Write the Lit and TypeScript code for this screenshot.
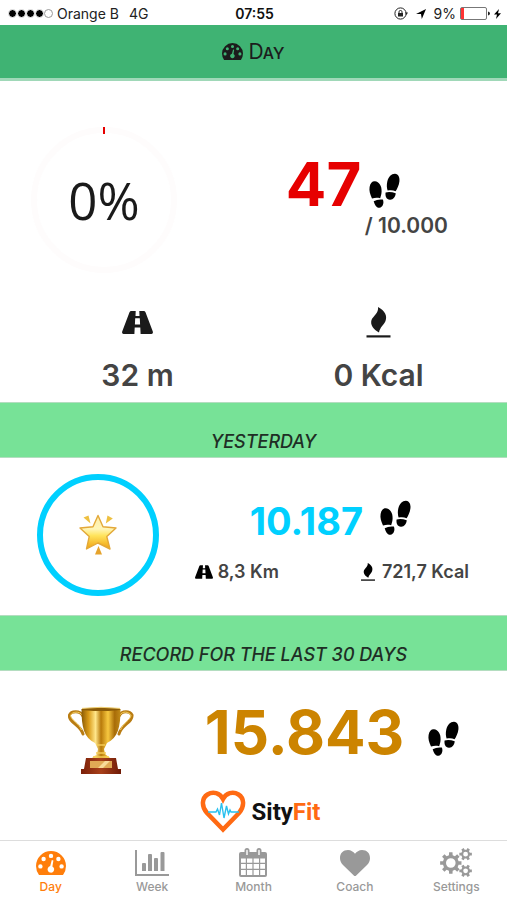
import { LitElement, html, css, svg } from "lit";
import { customElement, property } from "lit/decorators.js";

const gaugePath =
  "M3 24Q0 20 0 15A15 15 0 0 1 30 15Q30 20 27 24Z" +
  "M12.8 4.9a2.2 2.2 0 1 0 4.4 0a2.2 2.2 0 1 0-4.4 0Z" +
  "M5.4 8a2.2 2.2 0 1 0 4.4 0a2.2 2.2 0 1 0-4.4 0Z" +
  "M20.2 8a2.2 2.2 0 1 0 4.4 0a2.2 2.2 0 1 0-4.4 0Z" +
  "M2.2 15.4a2.2 2.2 0 1 0 4.4 0a2.2 2.2 0 1 0-4.4 0Z" +
  "M23.4 15.4a2.2 2.2 0 1 0 4.4 0a2.2 2.2 0 1 0-4.4 0Z" +
  "M15.8 9L17.4 9.4L16.4 15.4A3.3 3.3 0 1 1 14.2 15.1Z";

/** Outline of a toothed wheel with a round hole, to be filled even-odd. */
function gear(cx: number, cy: number, outer: number, inner: number, hole: number, teeth: number): string {
  const points: string[] = [];
  const step = (Math.PI * 2) / teeth;
  for (let i = 0; i < teeth; i++) {
    const a = i * step;
    for (const [r, d] of [[inner, -0.3], [outer, -0.2], [outer, 0.2], [inner, 0.3]]) {
      points.push(`${(cx + r * Math.cos(a + d * step)).toFixed(2)} ${(cy + r * Math.sin(a + d * step)).toFixed(2)}`);
    }
  }
  return `M${points.join("L")}ZM${cx - hole} ${cy}a${hole} ${hole} 0 1 0 ${hole * 2} 0a${hole} ${hole} 0 1 0 ${-hole * 2} 0Z`;
}

const icons: Record<string, { box: string; art: unknown }> = {
  gauge: { box: "0 0 30 24", art: svg`<path fill-rule="evenodd" d=${gaugePath} />` },
  "tab-gauge": { box: "-2 -3 34 29", art: svg`<path fill-rule="evenodd" d=${gaugePath} />` },
  steps: {
    box: "0 0 31 35",
    art: svg`<path d="M3 25.500C1 21 0 17.500.6 14C1.200 10 3.500 8 6 8.300C10 8.800 13 13 12.600 18.500C12.500 21.500 11.500 24 11.200 25.200C8 24.400 6 24.600 3 25.500Z" />
      <path d="M4.700 28.200Q8.500 26 13.800 26.600C15.500 30 13.500 34.600 10.500 34.800C7 35 5.800 31.500 4.700 28.200Z" />
      <path d="M18.600 17.600C17.800 15 17.500 12 18.300 8.500C19.500 3.500 22.500.6 26 .7C29.500 1 31 4.500 30.400 8.500C29.900 12.500 28 16.200 26.600 18.300C24 17 21.500 17 18.600 17.600Z" />
      <path d="M16.600 19.400Q21.500 18.300 26.700 20.300C26.500 24 24 27 20.800 26.700C17.500 26.300 16 23.500 16.600 19.400Z" />`,
  },
  road: {
    box: "0 0 31 23",
    art: svg`<path fill-rule="evenodd" d="M7.500 1.300Q8 0 9.300 0H21.700Q23 0 23.500 1.300L30.800 20.500Q31.400 23 29.500 23H1.500Q-.4 23 .2 20.500ZM13.700 0L13.500 5H17.500L17.300 0ZM13.200 7.200L12.900 13.500H18.100L17.800 7.200ZM12.700 16.500L12.400 23H18.600L18.300 16.500Z" />`,
  },
  flame: {
    box: "0 0 24 31",
    art: svg`<path d="M11.500 0C18.500 3.500 21 9 19 14C17.800 17.500 13.500 20 12.500 25.500C7 22.500 3.500 18 5 13C6.500 9 12.500 6 11.500 0Z" /><path d="M0 28.300H24V30.500H0Z" />`,
  },
  chart: {
    box: "0 -2 34 29",
    art: svg`<path d="M0 0H2V24H34V26H0ZM7 14Q7 13 8 13H10Q11 13 11 14V21H7ZM13 5Q13 4 14 4H16Q17 4 17 5V21H13ZM19 9Q19 8 20 8H22Q23 8 23 9V21H19ZM25.500 3Q25.500 2 26.500 2H28.500Q29.500 2 29.500 3V21H25.500Z" />`,
  },
  calendar: {
    box: "-3 0 34 29",
    art: svg`<path fill-rule="evenodd" d="M2 4H5.500V2.500Q5.500 0 8 0T10.500 2.500V4H17.500V2.500Q17.500 0 20 0T22.500 2.500V4H26Q28 4 28 6V27Q28 29 26 29H2Q0 29 0 27V6Q0 4 2 4ZM7.300 2.500V7H8.700V2.500Q8.700 1.800 8 1.800T7.300 2.500ZM19.300 2.500V7H20.700V2.500Q20.700 1.800 20 1.800T19.300 2.500Z
      M2 10.500V14.800H6.800V10.500ZM8 10.500V14.800H13.400V10.500ZM14.600 10.500V14.800H20V10.500ZM21.200 10.500V14.800H26V10.500Z
      M2 16V20.800H6.800V16ZM8 16V20.800H13.400V16ZM14.600 16V20.800H20V16ZM21.200 16V20.800H26V16Z
      M2 22V27H6.800V22ZM8 22V27H13.400V22ZM14.600 22V27H20V22ZM21.200 22V27H26V22Z" />`,
  },
  heart: {
    box: "-2 -2 34 29",
    art: svg`<path d="M15 26Q14.300 26 13.800 25.400L3 15C1 12.800 0 10.800 0 8.200C0 3 3.200 0 8 0C11 0 13.300 1.800 15 3.700C16.700 1.800 19 0 22 0C26.800 0 30 3 30 8.200C30 10.800 29 12.800 27 15L16.200 25.400Q15.700 26 15 26Z" />`,
  },
  gears: {
    box: "-1 0 34 29",
    art: svg`<path fill-rule="evenodd" d=${gear(10.8, 15, 10.8, 8, 4.8, 8)} />
      <path fill-rule="evenodd" d=${gear(25.6, 6.2, 6.4, 4.5, 2.4, 6)} />
      <path fill-rule="evenodd" d=${gear(25.6, 22.8, 6.4, 4.5, 2.4, 6)} />`,
  },
  lock: {
    box: "0 0 14 13",
    art: svg`<circle cx="6.500" cy="6.500" r="5.600" fill="none" stroke="currentColor" stroke-width="1" /><path d="M11 5.500H14L12.500 8Z" /><path d="M4 6H9V9.500H4Z" /><path d="M5 6V4.800Q5 3.500 6.500 3.500T8 4.800V6" fill="none" stroke="currentColor" />`,
  },
  arrow: { box: "0 0 10 10", art: svg`<path d="M10 0L5.800 10L5 5H0Z" />` },
  battery: {
    box: "0 0 30 13",
    art: svg`<rect x=".5" y=".5" width="26" height="12" rx="1.500" fill="#fff" stroke="#777" /><path d="M28 4.500Q30 5 30 6.500T28 8.500Z" /><path d="M1 1H4V12H1Z" fill="#f33" />`,
  },
  bolt: { box: "0 0 7 10", art: svg`<path d="M5 0L0 5.500H3L2 10L7 4.200H4Z" />` },
  star: {
    box: "0 0 38 42",
    art: svg`<defs><linearGradient id="g" x1="0" y1="0" x2="0" y2="1"><stop offset="0" stop-color="#fdeca8" /><stop offset=".4" stop-color="#fff6b8" /><stop offset=".6" stop-color="#ffe45c" /><stop offset="1" stop-color="#f0a010" /></linearGradient></defs>
      <path d="M19 1.500L24 12.800L37 14L27.800 22.600L31 35L19 29L7.500 35L10.200 22.600L1 14L14 12.800Z" fill="url(#g)" stroke="#e3a838" stroke-linejoin="round" stroke-width="1.400" />
      <path d="M4.500 3.500L9.500 1.500L11.500 9.500Z" fill="#eec040" /><path d="M28.500 1.500L33.800 4.500L26.800 9.500Z" fill="#eec040" /><path d="M19.500 32L23 40.500H16Z" fill="#e6a32c" />`,
  },
  trophy: {
    box: "0 0 66 68",
    art: svg`<defs><linearGradient id="cup"><stop offset="0" stop-color="#8a5a05" /><stop offset=".18" stop-color="#d99a17" /><stop offset=".36" stop-color="#ffe68a" /><stop offset=".5" stop-color="#b87a0a" /><stop offset=".68" stop-color="#f7c840" /><stop offset=".85" stop-color="#a86c08" /><stop offset="1" stop-color="#c08a18" /></linearGradient>
      <linearGradient id="base"><stop offset="0" stop-color="#7a1f08" /><stop offset=".5" stop-color="#a8401a" /><stop offset="1" stop-color="#6e1a06" /></linearGradient></defs>
      <path d="M15 9C12 3 3 4 1.500 8C0 15 13 18 15 27M51 9C54 3 62 4 64 8C65 15 53 18 51 27" fill="none" stroke="#b97c12" stroke-width="3" stroke-linecap="round" />
      <path d="M14.500 8.500C11.500 3.500 4 4.500 2.500 8.500C3 13 11 16 13.500 23M51.500 8.500C54.500 3.500 61 4.500 63 8.500C62.500 13 55 16 52.500 23" fill="none" stroke="#f3ce62" stroke-width="1" />
      <path d="M13.500 2H52.500C52.500 20 50 31 39 36L36 42L37 47L42 51H24L29 47L30 42L27 36C16 31 13.500 20 13.500 2Z" fill="url(#cup)" />
      <ellipse cx="33" cy="2.200" rx="19.500" ry="1.800" fill="#8c5c08" /><path d="M14 1.400Q33-.8 52 1.400" fill="none" stroke="#f0cf70" stroke-width="1" />
      <path d="M29 38H37M28 46H38M25 50H41" stroke="#f5cc55" stroke-width="1.500" />
      <path d="M18 51H48L50 62H53V67H13V62H16Z" fill="url(#base)" /><path d="M22 54H44V61H22Z" fill="#e0aa55" /><path d="M30 61L37 54H42L35 61Z" fill="#f8dc9a" />`,
  },
  brand: {
    box: "0 0 46 43",
    art: svg`<path d="M23 39.500L7 23C1 16 2 8 7.500 4.500C13 1 20 3 23 9C26 3 33 1 38.500 4.500C44 8 45 16 39 23Z" fill="#fff" stroke="#ff6a13" stroke-width="4.500" />
      <path d="M8 22H16L17.500 19L19.500 25L21.500 13L24 28L26.500 16L28.500 24L30 20L31 22H39" fill="none" stroke="#29c0ee" stroke-width="1.400" />`,
  },
};

@customElement("app-icon")
class AppIcon extends LitElement {
  @property() name = "";
  static styles = css`
    :host { display: block; flex: none; }
    .art { display: block; width: 100%; height: 100%; fill: currentColor; }
  `;
  render() {
    const icon = icons[this.name];
    return html`<svg class="art" viewBox=${icon.box} aria-hidden="true">${icon.art}</svg>`;
  }
}

const tabs = [
  { label: "Day", icon: "tab-gauge" },
  { label: "Week", icon: "chart" },
  { label: "Month", icon: "calendar" },
  { label: "Coach", icon: "heart" },
  { label: "Settings", icon: "gears" },
];

@customElement("app-root")
class AppRoot extends LitElement {
  static styles = css`
    :host {
      display: flex; flex-direction: column; min-height: 100vh; background: #fff; color: #444;
      font-family: Inter, "Liberation Sans", sans-serif;
    }
    .status { display: grid; grid-template-columns: 1fr auto 1fr; align-items: center; height: 25px; padding: 2px 6px 0 8px; box-sizing: border-box; color: #222; font-size: 14px; line-height: 16px; }
    .status-side { display: flex; align-items: center; gap: 4px; }
    .status-end { justify-content: flex-end; }
    .signal { display: flex; }
    .dot { width: 9px; height: 9px; box-sizing: border-box; border-radius: 50%; background: #000; border: 1px solid #fff; }
    .dot-empty { background: #fff; border-color: #999; }
    .network { margin-left: 6px; }
    .clock { font-weight: 600; color: #111; }
    .i-lock { width: 14px; height: 13px; margin-right: 4px; }
    .i-arrow { width: 10px; height: 10px; margin-right: 4px; color: #000; }
    .i-battery { width: 30px; height: 13px; }
    .i-bolt { width: 7px; height: 10px; color: #000; }
    .header { display: flex; justify-content: center; align-items: center; gap: 5px; height: 56px; box-sizing: border-box; background: #3fb373; border-bottom: 3px solid #a0d8b8; color: #1c1c1c; }
    .i-header { width: 21px; height: 17px; }
    .title { margin: 0; font-size: 21px; line-height: 24px; font-weight: 400; font-variant: small-caps; }
    .today { display: grid; grid-template-columns: 41fr 59fr; align-items: center; padding-top: 46px; }
    .ring { display: grid; place-items: center; box-sizing: border-box; border-radius: 50%; position: relative; justify-self: center; }
    .ring-today { width: 146px; height: 146px; border: 6px solid #fefcfc; }
    .tick { position: absolute; top: -6px; left: calc(50% - 1px); width: 2px; height: 7px; background: #e60000; }
    .percent { font-family: "Open Sans", "Noto Sans", sans-serif; font-size: 51px; line-height: 60px; color: #1a1a1a; }
    .score { display: flex; align-items: flex-end; }
    .result-today { padding-bottom: 8px; }
    .result-yesterday { padding-top: 14px; }
    .score-today { padding-left: 78px; gap: 8px; }
    .big { font-size: 60px; line-height: 60px; font-weight: 700; }
    .red { color: #e60000; }
    .blue { color: #00d0ff; }
    .gold { color: #cc8400; }
    .mid { font-size: 38px; line-height: 40px; font-weight: 700; }
    .i-steps { width: 31px; height: 35px; margin-bottom: 6px; color: #000; }
    .goal { margin: 0; padding-left: 157px; font-size: 21px; line-height: 24px; font-weight: 600; }
    .totals { display: grid; grid-template-columns: 1fr 1fr; padding: 34px 8px 9px 17px; }
    .total { display: flex; flex-direction: column; align-items: center; gap: 19px; font-size: 30px; line-height: 36px; font-weight: 600; }
    .i-total { width: 31px; height: 31px; color: #1a1a1a; }
    .band { margin: 0; height: 56px; padding-top: 28px; box-sizing: border-box; background: #77e297; border-top: 1px solid #b4ddc0; border-bottom: 1px solid #b4ddc0; color: #1f2e25; font-size: 18px; line-height: 22px; font-weight: 500; font-style: italic; text-align: center; padding-left: 20px; }
    .yesterday { display: grid; grid-template-columns: 36fr 64fr; align-items: center; height: 157px; box-sizing: border-box; padding: 0 0 4px 8px; }
    .ring-done { width: 122px; height: 122px; border: 6px solid #00d0ff; }
    .i-star { width: 38px; height: 42px; }
    .score-yesterday { gap: 17px; padding-left: 62px; }
    .details { display: flex; justify-content: space-between; padding: 20px 38px 0 7px; font-size: 18px; line-height: 22px; font-weight: 600; }
    .detail { display: flex; align-items: center; gap: 5px; }
    .i-detail { width: 18px; height: 18px; color: #000; }
    .record { display: grid; grid-template-columns: 40fr 60fr; align-items: center; padding-top: 31px; }
    .i-trophy { width: 66px; height: 72px; justify-self: center; }
    .score-record { gap: 24px; padding: 0 0 18px 2px; }
    .brand { display: flex; align-items: center; justify-content: center; gap: 6px; padding: 10px 0 5px 13px; font-family: Roboto, "Liberation Sans", sans-serif; font-size: 24px; line-height: 32px; font-weight: 700; color: #111; }
    .i-brand { width: 46px; height: 43px; }
    .fit { color: #ff6a13; }
    .tabs { display: grid; grid-template-columns: repeat(5, 1fr); margin-top: auto; border-top: 1px solid #ddd; }
    .tab { display: flex; flex-direction: column; align-items: center; gap: 2px; padding: 7px 0 5px; color: #999; font-size: 12px; line-height: 16px; font-weight: 500; text-decoration: none; }
    .tab-active { color: #ff7e0b; }
    .i-tab { width: 34px; height: 29px; }
  `;

  render() {
    return html`
      <div class="status">
        <div class="status-side">
          <span class="signal">${[1, 1, 1, 1, 0].map((on) => html`<i class="dot ${on ? "" : "dot-empty"}"></i>`)}</span>
          <span>Orange B</span><span class="network">4G</span>
        </div>
        <span class="clock">07:55</span>
        <div class="status-side status-end">
          <app-icon class="i-lock" name="lock"></app-icon>
          <app-icon class="i-arrow" name="arrow"></app-icon>
          <span>9%</span>
          <app-icon class="i-battery" name="battery"></app-icon>
          <app-icon class="i-bolt" name="bolt"></app-icon>
        </div>
      </div>
      <header class="header">
        <app-icon class="i-header" name="gauge"></app-icon>
        <h1 class="title">Day</h1>
      </header>
      <main>
        <section class="today">
          <div class="ring ring-today"><i class="tick"></i><span class="percent">0%</span></div>
          <div class="result-today">
            <div class="score score-today"><span class="big red">47</span><app-icon class="i-steps" name="steps"></app-icon></div>
            <p class="goal">/ 10.000</p>
          </div>
        </section>
        <section class="totals">
          <div class="total"><app-icon class="i-total" name="road"></app-icon><span>32 m</span></div>
          <div class="total"><app-icon class="i-total" name="flame"></app-icon><span>0 Kcal</span></div>
        </section>
        <h2 class="band">YESTERDAY</h2>
        <section class="yesterday">
          <div class="ring ring-done"><app-icon class="i-star" name="star"></app-icon></div>
          <div class="result-yesterday">
            <div class="score score-yesterday"><span class="mid blue">10.187</span><app-icon class="i-steps" name="steps"></app-icon></div>
            <div class="details">
              <span class="detail"><app-icon class="i-detail" name="road"></app-icon>8,3 Km</span>
              <span class="detail"><app-icon class="i-detail" name="flame"></app-icon>721,7 Kcal</span>
            </div>
          </div>
        </section>
        <h2 class="band">RECORD FOR THE LAST 30 DAYS</h2>
        <section class="record">
          <app-icon class="i-trophy" name="trophy"></app-icon>
          <div class="score score-record"><span class="big gold">15.843</span><app-icon class="i-steps" name="steps"></app-icon></div>
        </section>
        <div class="brand"><app-icon class="i-brand" name="brand"></app-icon><span>Sity<span class="fit">Fit</span></span></div>
      </main>
      <nav class="tabs">
        ${tabs.map((tab, i) => html`<a class="tab ${i === 0 ? "tab-active" : ""}" href="#${tab.label.toLowerCase()}"><app-icon class="i-tab" name=${tab.icon}></app-icon>${tab.label}</a>`)}
      </nav>
    `;
  }
}
